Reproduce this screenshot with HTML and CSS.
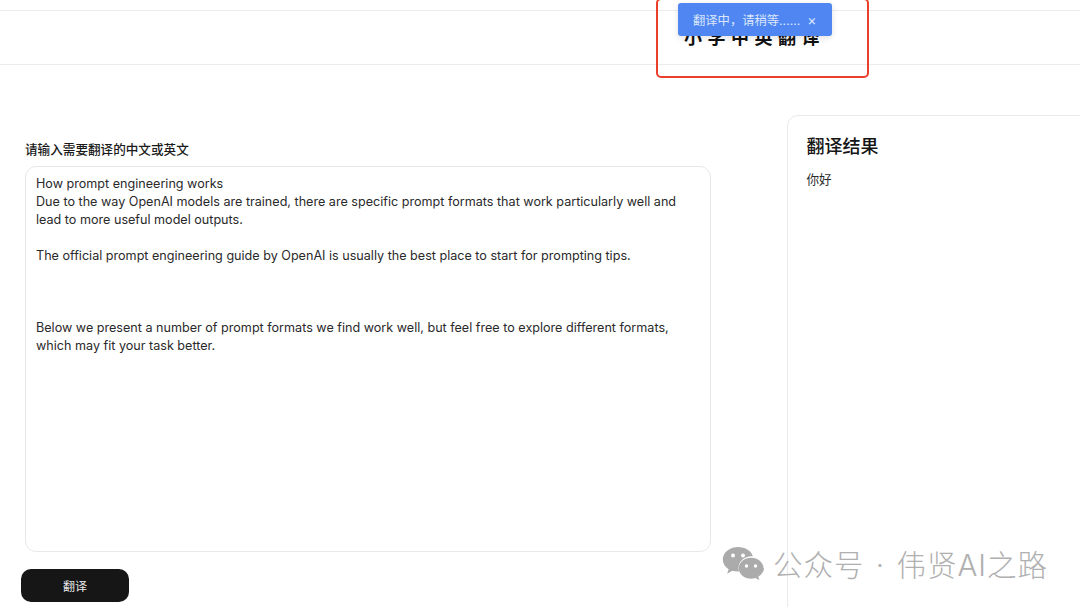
FILE: index.html
```html
<!DOCTYPE html>
<html lang="zh">
<head>
<meta charset="utf-8">
<title>小学中英翻译</title>
<link rel="stylesheet" href="styles.css">
</head>
<body>
<div class="page">
  <header class="header"><h1 class="title">小学中英翻译</h1></header>
  <main class="main">
    <section class="left">
      <label class="label">请输入需要翻译的中文或英文</label>
      <div class="input">How prompt engineering works
Due to the way OpenAI models are trained, there are specific prompt formats that work particularly well and
lead to more useful model outputs.

The official prompt engineering guide by OpenAI is usually the best place to start for prompting tips.



Below we present a number of prompt formats we find work well, but feel free to explore different formats,
which may fit your task better.</div>
      <button class="btn">翻译</button>
    </section>
    <aside class="result">
      <h2 class="result-title">翻译结果</h2>
      <p class="result-text">你好</p>
    </aside>
  </main>
</div>
<div class="highlight"></div>
<div class="toast"><span>翻译中，请稍等......</span><span class="close">×</span></div>
<div class="watermark">
  <svg class="wx" viewBox="0 0 42 36" width="42" height="36" aria-hidden="true">
    <path class="wx1" d="M16 1C7.4 1 .8 6.700.8 13.600c0 4 2.200 7.300 5.800 9.700l-1.400 4.400 5.100-2.900c1.900.5 3.500.8 5.500.8h1.300c-.4-1.100-.6-2.300-.6-3.500 0-6.700 5.700-11.900 13-11.900h1.300C29.500 5 23.300 1 16 1z"/>
    <circle class="hole" cx="11" cy="9.500" r="2"/>
    <circle class="hole" cx="21" cy="9.500" r="2"/>
    <path class="wx1" d="M41.500 22.300c0-5.800-5.700-10.500-12.300-10.500-7 0-12.500 4.700-12.500 10.500s5.500 10.500 12.500 10.500c1.500 0 2.900-.3 4.300-.7l3.900 2.200-1.100-3.600c3.300-2.200 5.700-5.100 5.700-8.400z"/>
    <circle class="hole" cx="24.500" cy="20" r="1.700"/>
    <circle class="hole" cx="33.500" cy="20" r="1.700"/>
  </svg>
  <span class="wm-text">公众号 · 伟贤AI之路</span>
</div>
</body>
</html>
```
FILE: styles.css
```css
* { box-sizing: border-box; }
html, body { margin: 0; height: 100%; }
body {
  background: #fff;
  color: #1a1a1a;
  font-family: Inter, "Noto Sans CJK SC", sans-serif;
  overflow: hidden;
}
.page { width: 1080px; height: 607px; padding-top: 10px; overflow: hidden; }
.header {
  height: 55px;
  border-top: 1px solid #ececf0;
  border-bottom: 1px solid #ececf0;
  display: flex;
  align-items: center;
  justify-content: center;
  padding-left: 429px;
}
.title {
  margin: 0;
  font-size: 18px;
  font-weight: 700;
  letter-spacing: 5.500px;
  color: #111;
  line-height: 52px;
}
.main {
  display: flex;
  align-items: flex-start;
  padding-top: 50px;
  padding-left: 25px;
  gap: 76px;
}
.left { width: 686px; flex: none; padding-top: 27px; }
.label {
  display: block;
  font-size: 12.600px;
  font-weight: 500;
  line-height: 16px;
  color: #1a1a1a;
  margin-bottom: 8px;
}
.input {
  height: 386px;
  border: 1px solid #e8e8ea;
  border-radius: 11px;
  padding: 8px 10px;
  font-size: 12.600px;
  line-height: 18px;
  white-space: pre-wrap;
  color: #2a2a2a;
}
.btn {
  display: block;
  width: 108px;
  height: 33px;
  margin: 17px 0 0 -4px;
  background: #161617;
  color: #e8e8e8;
  border: 0;
  border-radius: 10px;
  font: 12px/33px Inter, "Noto Sans CJK SC", sans-serif;
}
.result {
  flex: none;
  width: 320px;
  height: 520px;
  border: 1px solid #e9e9ee;
  border-radius: 11px;
  padding: 20px 18.500px;
}
.result-title {
  margin: 0;
  font-size: 18px;
  font-weight: 500;
  line-height: 22px;
  color: #151515;
}
.result-text {
  margin: 13px 0 0;
  font-size: 12.600px;
  line-height: 18px;
  color: #2a2a2a;
}
.highlight {
  position: absolute;
  left: 656px;
  top: -2px;
  width: 213px;
  height: 80px;
  border: 2.500px solid #ea3f2b;
  border-radius: 5px;
}
.toast {
  position: absolute;
  left: 678px;
  top: 3px;
  width: 154px;
  height: 33px;
  display: flex;
  align-items: center;
  padding-left: 15px;
  gap: 8px;
  background: #4f86f1;
  border-radius: 3px;
  color: #dbe6fb;
  font-size: 12.300px;
  box-shadow: 0 2px 6px rgba(0,0,0,.12);
}
.close { font-size: 14px; margin-left: -1px; }
.watermark {
  position: absolute;
  left: 722px;
  top: 545px;
  display: flex;
  align-items: center;
  gap: 9px;
  color: #b0b0b0;
  line-height: 36px;
  white-space: nowrap;
}
.wm-text { font-size: 29.500px; font-weight: 300; letter-spacing: 1px; word-spacing: 2px; padding-top: 2px; }
.wx { flex: none; }
.wx1 { fill: #ababab; }
.hole { fill: #fff; }
```
